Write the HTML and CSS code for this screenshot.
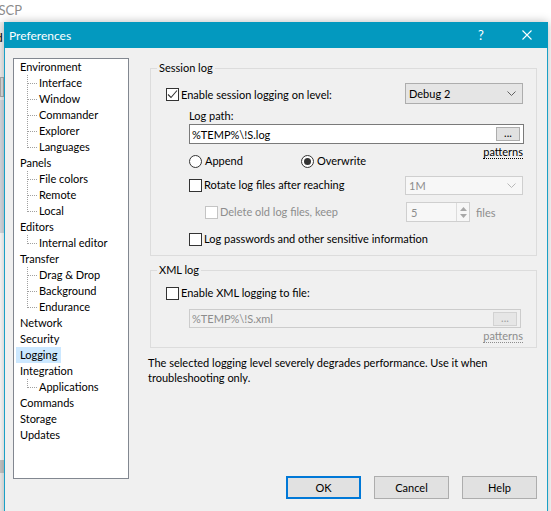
FILE: index.html
```html
<!DOCTYPE html>
<html>
<head>
<meta charset="utf-8">
<title>Preferences</title>
<link rel="stylesheet" href="styles.css">
</head>
<body>
<div class="desktop">
  <div class="bgwin">
    <div class="bgtitle"><span>WinSCP</span></div>
    <div class="bgstrip">
      <span class="bs-d">d</span>
      <span class="bs-l">l</span>
      <span class="bs-ctl"></span>
      <span class="bs-blue"></span>
      <span class="bs-white"></span>
      <span class="bs-gray"></span>
    </div>
  </div>

  <div class="dialog">
    <div class="titlebar">
      <span class="title">Preferences</span>
      <span class="cap cap-help">?</span>
      <span class="cap cap-close"><svg width="10" height="10" viewBox="0 0 10 10"><path d="M0.5 0.5 L9.5 9.5 M9.5 0.5 L0.5 9.5" stroke="#fff" stroke-width="1.1" fill="none"/></svg></span>
    </div>
    <div class="client">
      <div class="tree">
        <div class="node root">Environment</div>
        <div class="kids">
          <div class="node child">Interface</div>
          <div class="node child">Window</div>
          <div class="node child">Commander</div>
          <div class="node child">Explorer</div>
          <div class="node child last">Languages</div>
        </div>
        <div class="node root">Panels</div>
        <div class="kids">
          <div class="node child">File colors</div>
          <div class="node child">Remote</div>
          <div class="node child last">Local</div>
        </div>
        <div class="node root">Editors</div>
        <div class="kids">
          <div class="node child last">Internal editor</div>
        </div>
        <div class="node root">Transfer</div>
        <div class="kids">
          <div class="node child">Drag &amp; Drop</div>
          <div class="node child">Background</div>
          <div class="node child last">Endurance</div>
        </div>
        <div class="node root">Network</div>
        <div class="node root">Security</div>
        <div class="node root"><span class="sel">Logging</span></div>
        <div class="node root">Integration</div>
        <div class="kids">
          <div class="node child last">Applications</div>
        </div>
        <div class="node root">Commands</div>
        <div class="node root">Storage</div>
        <div class="node root">Updates</div>
      </div>

      <div class="pane">
        <div class="group session">
          <div class="legend">Session log</div>
          <div class="row r-level">
            <label class="check"><span class="cb"><svg width="11" height="11" viewBox="0 0 11 11"><path d="M1 5.5 L4 8.5 L10 1.5" stroke="#333" stroke-width="1.1" fill="none"/></svg></span>Enable session logging on level:</label>
            <div class="combo level"><span class="combo-text">Debug 2</span><svg class="chev" width="9" height="5" viewBox="0 0 9 5"><path d="M0.5 0.5 L4.5 4.5 L8.5 0.5" stroke="#606060" stroke-width="1" fill="none"/></svg></div>
          </div>
          <div class="field-label indent">Log path:</div>
          <div class="input indent path"><span class="input-text">%TEMP%\!S.log</span><span class="dots">...</span></div>
          <div class="patterns"><span class="plink">patterns</span></div>
          <div class="row radios indent">
            <label class="radio append"><span class="rb"></span>Append</label>
            <label class="radio"><span class="rb on"><span class="dot"></span></span>Overwrite</label>
          </div>
          <div class="row r-rotate indent">
            <label class="check"><span class="cb"></span>Rotate log files after reaching</label>
            <div class="combo off size"><span class="combo-text">1M</span><svg class="chev" width="9" height="5" viewBox="0 0 9 5"><path d="M0.5 0.5 L4.5 4.5 L8.5 0.5" stroke="#b8b8b8" stroke-width="1" fill="none"/></svg></div>
          </div>
          <div class="row r-delete">
            <label class="check off"><span class="cb"></span>Delete old log files, keep</label>
            <div class="spin"><span class="spin-text">5</span><span class="spin-btns"><svg width="7" height="4" viewBox="0 0 7 4"><path d="M0 4 L3.5 0 L7 4 Z" fill="#a8a8a8"/></svg><svg width="7" height="4" viewBox="0 0 7 4"><path d="M0 0 L3.5 4 L7 0 Z" fill="#a8a8a8"/></svg></span></div>
            <span class="unit">files</span>
          </div>
          <div class="row r-pass indent">
            <label class="check"><span class="cb"></span>Log passwords and other sensitive information</label>
          </div>
        </div>

        <div class="group xml">
          <div class="legend">XML log</div>
          <div class="row r-xml">
            <label class="check"><span class="cb"></span>Enable XML logging to file:</label>
          </div>
          <div class="input indent off xmlpath"><span class="input-text">%TEMP%\!S.xml</span><span class="dots">...</span></div>
          <div class="patterns off"><span class="plink">patterns</span></div>
        </div>

        <p class="note">The selected logging level severely degrades performance. Use it when<br>troubleshooting only.</p>

        <div class="buttons">
          <button class="btn default">OK</button>
          <button class="btn">Cancel</button>
          <button class="btn">Help</button>
        </div>
      </div>
    </div>
  </div>
</div>
</body>
</html>
```

FILE: styles.css
```css
* { box-sizing: border-box; }
html, body { margin: 0; padding: 0; }
body {
  width: 551px;
  height: 511px;
  overflow: hidden;
  background: #ffffff;
  font-family: Lato, "Noto Sans", sans-serif;
  font-size: 11px;
  color: #000;
}
.desktop {
  position: relative;
  width: 551px;
  height: 511px;
  overflow: hidden;
}

/* window behind */
.bgwin {
  position: absolute;
  left: 0;
  top: 0;
  width: 30px;
  height: 511px;
}
.bgtitle {
  width: 22px;
  height: 22px;
  display: flex;
  justify-content: flex-end;
  align-items: center;
  overflow: hidden;
  white-space: nowrap;
  color: #8c8c8c;
  font-size: 13px;
  padding-bottom: 2px;
}
.bgstrip {
  display: flex;
  flex-direction: column;
  width: 4px;
  height: 489px;
  background: #f0f0f0;
  overflow: hidden;
}
.bgstrip span { display: block; flex: none; }
.bs-d { height: 28px; line-height: 32px; margin-left: -4px; font-size: 12px; }
.bs-l { height: 22px; line-height: 26px; margin-left: -4px; font-size: 12px; }
.bs-ctl { height: 20px; margin-top: 5px; border: 1px solid #adadad; background: #e1e1e1; }
.bs-blue { height: 133px; margin-top: 3px; background: #d9dde4; }
.bs-white { height: 227px; background: #ffffff; }
.bs-gray { height: 13px; background: #c8c8c8; }

/* dialog */
.dialog {
  position: absolute;
  left: 4px;
  top: 22px;
  width: 544px;
  height: 500px;
  border: 1px solid #1aa0c6;
  border-top: 0;
  background: #f0f0f0;
  box-shadow: 0 0 9px rgba(0, 0, 0, 0.28);
  display: flex;
  flex-direction: column;
}
.titlebar {
  height: 26px;
  background: #0399bf;
  color: #fff;
  display: flex;
  align-items: center;
  flex: none;
  margin: 0 -1px;
  padding-left: 5px;
}
.title { flex: 1; font-size: 12px; padding-top: 1px; }
.cap {
  width: 46px;
  height: 26px;
  display: flex;
  align-items: center;
  justify-content: center;
}
.cap-help { font-size: 13px; padding-left: 4px; }
.cap-close { padding-left: 4px; }

.client {
  flex: 1;
  display: flex;
  align-items: flex-start;
  padding: 10px 0 0 8px;
}

/* tree */
.tree {
  width: 116px;
  height: 421px;
  background: #fff;
  border: 1px solid #828790;
  flex: none;
  padding-top: 0;
}
.node {
  height: 16px;
  line-height: 16px;
  white-space: nowrap;
}
.node.root { padding-left: 6px; }
.node.root .sel {
  display: inline-block;
  background: #cce8ff;
  margin-left: -4px;
  padding: 0 4px;
  height: 16px;
}
.node.child {
  padding-left: 25px;
  background-image:
    repeating-linear-gradient(to bottom, #a0a0a0 0 1px, transparent 1px 2px),
    repeating-linear-gradient(to right, #a0a0a0 0 1px, transparent 1px 2px);
  background-repeat: no-repeat;
  background-position: 13px 0, 14px 8px;
  background-size: 1px 16px, 10px 1px;
}
.node.child.last {
  background-size: 1px 9px, 10px 1px;
}

/* right pane */
.pane {
  width: 389px;
  height: 441px;
  margin-left: 19px;
  display: flex;
  flex-direction: column;
  flex: none;
}
.group {
  margin-left: 2px;
  border: 1px solid #dcdcdc;
  padding: 0 13px 0 15px;
}
.group.session { margin-top: 10px; padding-bottom: 9px; }
.group.xml { margin-top: 14px; padding-bottom: 4px; }
.legend {
  width: fit-content;
  margin: -9px 0 0 -9px;
  padding: 0 2px;
  height: 16px;
  line-height: 16px;
  background: #f0f0f0;
}
.indent { margin-left: 23px; }

.row { display: flex; align-items: center; white-space: nowrap; }
.r-level { height: 21px; margin-top: 7px; }
.r-level .check { margin-top: 2px; }
.field-label { height: 16px; line-height: 16px; margin-top: 4px; }
.radios { height: 14px; margin-top: -5px; }
.r-rotate { height: 18px; margin-top: 8px; }
.r-delete { height: 20px; margin-top: 8px; }
.r-pass { height: 14px; margin-top: 10px; }
.r-xml { height: 14px; margin-top: 8px; }

.check, .radio {
  display: inline-flex;
  align-items: center;
  white-space: nowrap;
  line-height: 14px;
}
.cb {
  width: 13px;
  height: 13px;
  border: 1px solid #333;
  background: #fff;
  margin-right: 2px;
  flex: none;
  display: flex;
  align-items: center;
  justify-content: center;
}
.check.off { color: #8d8d8d; margin-left: 39px; }
.check.off .cb { border-color: #c4c4c4; }
.rb {
  width: 13px;
  height: 13px;
  border: 1px solid #333;
  border-radius: 50%;
  background: #fff;
  margin-right: 3px;
  flex: none;
  display: flex;
  align-items: center;
  justify-content: center;
}
.rb .dot { width: 7px; height: 7px; border-radius: 50%; background: #333; }
.radio.append { width: 112px; }

.combo {
  margin-left: auto;
  width: 118px;
  display: flex;
  align-items: center;
  padding: 0 6px 0 3px;
  border: 1px solid #adadad;
  background: #e5e5e5;
}
.combo.level { height: 21px; }
.combo.size { height: 19px; background: #f7f7f7; border-color: #cfcfcf; color: #8d8d8d; }
.combo-text { flex: 1; }

.input {
  height: 20px;
  border: 1px solid #7a7a7a;
  background: #fff;
  display: flex;
  align-items: center;
  padding: 0 3px 0 2px;
  margin-right: -1px;
}
.input-text { flex: 1; white-space: nowrap; }
.dots {
  width: 24px;
  height: 14px;
  line-height: 10px;
  text-align: center;
  background: #e1e1e1;
  border: 1px solid #adadad;
  font-size: 11px;
}
.input.off { height: 19px; border-color: #cccccc; background: #f0f0f0; color: #8d8d8d; margin-right: 2px; }
.input.off .dots { background: #e6e6e6; border-color: #d2d2d2; color: #a0a0a0; }
.xmlpath { margin-top: 9px; }

.patterns {
  height: 14px;
  line-height: 14px;
  margin-top: 1px;
  text-align: right;
}
.plink { border-bottom: 1px dotted #000; line-height: 12px; display: inline-block; }
.patterns.off { color: #8d8d8d; }
.patterns.off .plink { border-bottom-color: #8d8d8d; }

.spin {
  margin-left: auto;
  width: 64px;
  height: 20px;
  border: 1px solid #cfcfcf;
  background: #f7f7f7;
  color: #8d8d8d;
  display: flex;
  align-items: center;
  padding-left: 4px;
}
.spin-text { flex: 1; }
.spin-btns {
  width: 13px;
  height: 18px;
  border-left: 1px solid #dcdcdc;
  display: flex;
  flex-direction: column;
  align-items: center;
  justify-content: space-around;
  padding: 2px 0;
}
.unit { color: #8d8d8d; margin-left: 6px; width: 47px; }

.note {
  margin: 7px 0 0 0;
  line-height: 15px;
  white-space: nowrap;
}

.buttons {
  margin-top: auto;
  display: flex;
  justify-content: flex-end;
  gap: 13px;
}
.btn {
  width: 75px;
  height: 23px;
  font-family: inherit;
  font-size: 11px;
  background: #e1e1e1;
  border: 1px solid #adadad;
  padding: 0;
  color: #000;
}
.btn.default { border: 2px solid #0078d7; }
```
